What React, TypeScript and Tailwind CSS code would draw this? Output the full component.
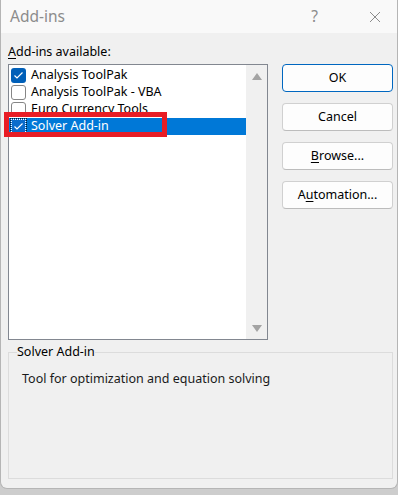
import React from "react";

const font = { fontFamily: '"Segoe UI", "Noto Sans", sans-serif' };

const CheckBox = ({ checked, focused }: { checked: boolean; focused?: boolean }) => {
    if (focused) {
        return (
            <div className="w-[15px] h-[15px] shrink-0 border border-dotted border-white outline outline-1 outline-dotted outline-[#1b1b1b] flex items-center justify-center bg-[#0a6ccc]">
                <svg width="11" height="9" viewBox="0 0 11 9">
                    <polyline points="1.5,4.5 4,7 9.5,1.5" fill="none" stroke="white" strokeWidth="1.2" />
                </svg>
            </div>
        );
    }
    if (checked) {
        return (
            <div className="w-[15px] h-[15px] shrink-0 rounded-[3px] bg-[#005fb8] flex items-center justify-center">
                <svg width="11" height="9" viewBox="0 0 11 9">
                    <polyline points="1.5,4.5 4,7 9.5,1.5" fill="none" stroke="white" strokeWidth="1.2" />
                </svg>
            </div>
        );
    }
    return <div className="w-[15px] h-[15px] shrink-0 rounded-[3px] border border-[#868686] bg-white" />;
};

const items = [
    { label: "Analysis ToolPak", checked: true },
    { label: "Analysis ToolPak - VBA", checked: false },
    { label: "Euro Currency Tools", checked: false },
    { label: "Solver Add-in", checked: true, selected: true },
];

const DialogButton = ({ children, primary }: { children: React.ReactNode; primary?: boolean }) => (
    <div
        className={
            primary
                ? "h-[28px] w-[111px] rounded-[4px] border border-[#0067c0] bg-[#fdfdfd] flex items-center justify-center text-[12.5px] text-black"
                : "h-[28px] w-[111px] rounded-[4px] border border-[#d0d0d0] border-b-[#bcbcbc] bg-[#fdfdfd] flex items-center justify-center text-[12.5px] text-black"
        }
    >
        {children}
    </div>
);

export default function App() {
    return (
        <div className="w-[398px] h-[495px] bg-[#cdcdcd] overflow-hidden" style={font}>
            <div className="relative w-[398px] h-[489px] bg-[#f0f0f0] border-l border-r border-b border-[#b5b5b5] rounded-b-[7px] flex flex-col">
                {/* title bar */}
                <div className="h-[33px] bg-[#f9f9f9] flex items-center pl-[9px] shrink-0">
                    <span className="text-[15.5px] text-[#8c8c8c] leading-none">Add-ins</span>
                    <span className="ml-auto text-[15.5px] text-[#8c8c8c] leading-none mr-[51px]">?</span>
                    <svg width="12" height="12" viewBox="0 0 12 12" className="mr-[16px]">
                        <line x1="1" y1="1" x2="11" y2="11" stroke="#8c8c8c" strokeWidth="1" />
                        <line x1="11" y1="1" x2="1" y2="11" stroke="#8c8c8c" strokeWidth="1" />
                    </svg>
                </div>

                <div className="pl-[7px] pr-[4px] pt-[11px] flex flex-col">
                    <div className="text-[12.5px] leading-[16px] text-black">
                        <span className="underline underline-offset-2">A</span>dd-ins available:
                    </div>

                    <div className="flex mt-[4px]">
                        {/* listbox */}
                        <div className="w-[260px] h-[276px] shrink-0 border border-[#828790] flex">
                            <div className="flex-1 bg-white pt-[2px]">
                                {items.map((it) => (
                                    <div
                                        key={it.label}
                                        className={
                                            it.selected
                                                ? "h-[17px] flex items-center pl-[2px] gap-[5px] bg-[#0078d7] text-white text-[12.5px]"
                                                : "h-[17px] flex items-center pl-[2px] gap-[5px] text-black text-[12.5px]"
                                        }
                                    >
                                        <CheckBox checked={it.checked} focused={it.selected} />
                                        <span className="leading-none whitespace-nowrap">{it.label}</span>
                                    </div>
                                ))}
                            </div>
                            <div className="w-[21px] bg-[#f0f0f0] flex flex-col items-center justify-between pt-[8px] pb-[7px]">
                                <svg width="10" height="7" viewBox="0 0 10 7">
                                    <polygon points="5,0 10,7 0,7" fill="#a3a3a3" />
                                </svg>
                                <svg width="10" height="7" viewBox="0 0 10 7">
                                    <polygon points="0,0 10,0 5,7" fill="#a3a3a3" />
                                </svg>
                            </div>
                        </div>

                        {/* buttons */}
                        <div className="ml-[14px] shrink-0 flex flex-col gap-[11px]">
                            <DialogButton primary>OK</DialogButton>
                            <DialogButton>Cancel</DialogButton>
                            <DialogButton>
                                <span><span className="underline underline-offset-2">B</span>rowse...</span>
                            </DialogButton>
                            <DialogButton>
                                <span>A<span className="underline underline-offset-2">u</span>tomation...</span>
                            </DialogButton>
                        </div>
                    </div>

                    {/* description group */}
                    <fieldset className="mt-[4px] w-[385px] h-[135px] border border-[#dcdcdc] px-[8px]">
                        <legend className="text-[12.5px] leading-[16px] text-black">Solver Add-in</legend>
                        <div className="mt-[11px] ml-[5px] text-[12.5px] leading-[16px] text-[#1a1a1a]">
                            Tool for optimization and equation solving
                        </div>
                    </fieldset>
                </div>

                {/* annotation highlight */}
                <div className="absolute left-[3px] top-[112px] w-[163px] h-[25px] border-[5px] border-[#e81d25]" />
            </div>
        </div>
    );
}
